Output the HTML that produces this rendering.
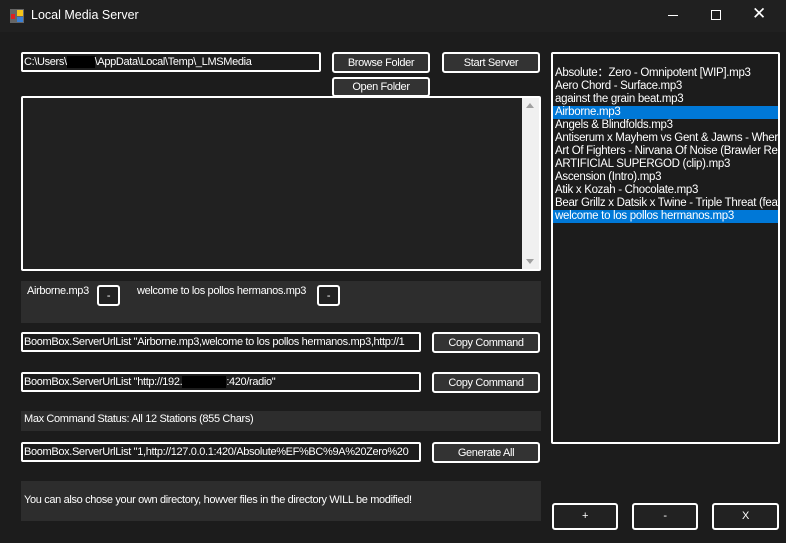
<!DOCTYPE html>
<html><head><meta charset="utf-8"><style>
*{box-sizing:border-box;margin:0;padding:0}
body{width:786px;height:543px;background:#1c1c1c;font-family:"Liberation Sans",sans-serif;font-size:11px;letter-spacing:-0.35px;color:#fff;position:relative;overflow:hidden}
.t{position:absolute;left:0;top:0;width:786px;height:32px;background:#202020;letter-spacing:0}
.a{position:absolute}
.tb{position:absolute;border:2px solid #fff;border-radius:2px;background:#1c1c1c;padding:1px 0 0 1px;white-space:nowrap;overflow:hidden;line-height:15px}
.bt{position:absolute;border:2px solid #fff;border-radius:3px;background:#333;text-align:center;line-height:15px;padding-top:2px;color:#fff;overflow:hidden}
.li{height:13px;line-height:13px;padding-left:2px;white-space:nowrap;font-size:11.5px;letter-spacing:-0.3px}
.sel{background:#0078d7}
.blk{display:inline-block;background:#000;height:12px;vertical-align:middle}
</style></head><body>
<div class="t">
 <svg class="a" style="left:10px;top:9px" width="14" height="14"><rect x="0" y="0" width="14" height="14" fill="#666"/><rect x="7" y="1" width="6" height="6" fill="#f5c518"/><rect x="1" y="5" width="4" height="5" fill="#d22"/><rect x="7" y="8" width="6" height="5" fill="#3a7fd5"/></svg>
 <div class="a" style="left:31px;top:8px;font-size:12.5px">Local Media Server</div>
 <div class="a" style="left:668px;top:15px;width:10px;height:1px;background:#fff"></div>
 <div class="a" style="left:711px;top:10px;width:10px;height:10px;border:1px solid #fff"></div>
 <div class="a" style="left:752px;top:4px;font-size:17px">✕</div>
</div>
<div class="tb" style="left:21px;top:52px;width:300px;height:20px">C:\Users\<span class="blk" style="width:28px"></span>\AppData\Local\Temp\_LMSMedia</div>
<div class="bt" style="left:332px;top:52px;width:98px;height:21px">Browse Folder</div>
<div class="bt" style="left:442px;top:52px;width:98px;height:21px">Start Server</div>
<div class="bt" style="left:332px;top:77px;width:98px;height:20px;padding-top:1px">Open Folder</div>
<div class="a" style="left:21px;top:96px;width:520px;height:175px;border:2px solid #fff;border-radius:2px;background:#212121"></div>
<div class="a" style="left:522px;top:98px;width:17px;height:171px;background:#f0f0f0"></div>
<div class="a" style="left:526px;top:103px;width:0;height:0;border-left:4px solid transparent;border-right:4px solid transparent;border-bottom:5px solid #a0a0a0"></div>
<div class="a" style="left:526px;top:259px;width:0;height:0;border-left:4px solid transparent;border-right:4px solid transparent;border-top:5px solid #a0a0a0"></div>
<div class="a" style="left:21px;top:281px;width:520px;height:42px;background:#2d2d2d"></div>
<div class="a" style="left:27px;top:285px">Airborne.mp3</div>
<div class="bt" style="left:97px;top:285px;width:23px;height:21px;background:#222">-</div>
<div class="a" style="left:137px;top:285px">welcome to los pollos hermanos.mp3</div>
<div class="bt" style="left:317px;top:285px;width:23px;height:21px;background:#222">-</div>
<div class="tb" style="left:21px;top:332px;width:400px;height:20px">BoomBox.ServerUrlList "Airborne.mp3,welcome to los pollos hermanos.mp3,http://1</div>
<div class="bt" style="left:432px;top:332px;width:108px;height:21px">Copy Command</div>
<div class="tb" style="left:21px;top:372px;width:400px;height:20px">BoomBox.ServerUrlList "http://192.<span class="blk" style="width:44px"></span>:420/radio"</div>
<div class="bt" style="left:432px;top:372px;width:108px;height:21px">Copy Command</div>
<div class="a" style="left:21px;top:411px;width:520px;height:20px;background:#2d2d2d;padding:2px 0 0 3px">Max Command Status: All 12 Stations (855 Chars)</div>
<div class="tb" style="left:21px;top:442px;width:400px;height:20px">BoomBox.ServerUrlList "1,http://127.0.0.1:420/Absolute%EF%BC%9A%20Zero%20</div>
<div class="bt" style="left:432px;top:442px;width:108px;height:21px">Generate All</div>
<div class="a" style="left:21px;top:481px;width:520px;height:40px;background:#2d2d2d;padding:13px 0 0 3px">You can also chose your own directory, howver files in the directory WILL be modified!</div>
<div class="a" style="left:551px;top:52px;width:229px;height:392px;border:2px solid #fff;border-radius:2px;background:#1c1c1c;padding-top:13px;overflow:hidden">
<div class="li">Absolute：Zero - Omnipotent [WIP].mp3</div>
<div class="li">Aero Chord - Surface.mp3</div>
<div class="li">against the grain beat.mp3</div>
<div class="li sel">Airborne.mp3</div>
<div class="li">Angels &amp; Blindfolds.mp3</div>
<div class="li">Antiserum x Mayhem vs Gent &amp; Jawns - Where Y</div>
<div class="li">Art Of Fighters - Nirvana Of Noise (Brawler Remix</div>
<div class="li">ARTIFICIAL SUPERGOD (clip).mp3</div>
<div class="li">Ascension (Intro).mp3</div>
<div class="li">Atik x Kozah - Chocolate.mp3</div>
<div class="li">Bear Grillz x Datsik x Twine - Triple Threat (feat.</div>
<div class="li sel">welcome to los pollos hermanos.mp3</div>
</div>
<div class="bt" style="left:552px;top:503px;width:66px;height:27px;line-height:23px;padding-top:0;background:#222">+</div>
<div class="bt" style="left:632px;top:503px;width:66px;height:27px;line-height:23px;padding-top:0;background:#222">-</div>
<div class="bt" style="left:712px;top:503px;width:67px;height:27px;line-height:23px;padding-top:0;background:#222">X</div>
</body></html>
